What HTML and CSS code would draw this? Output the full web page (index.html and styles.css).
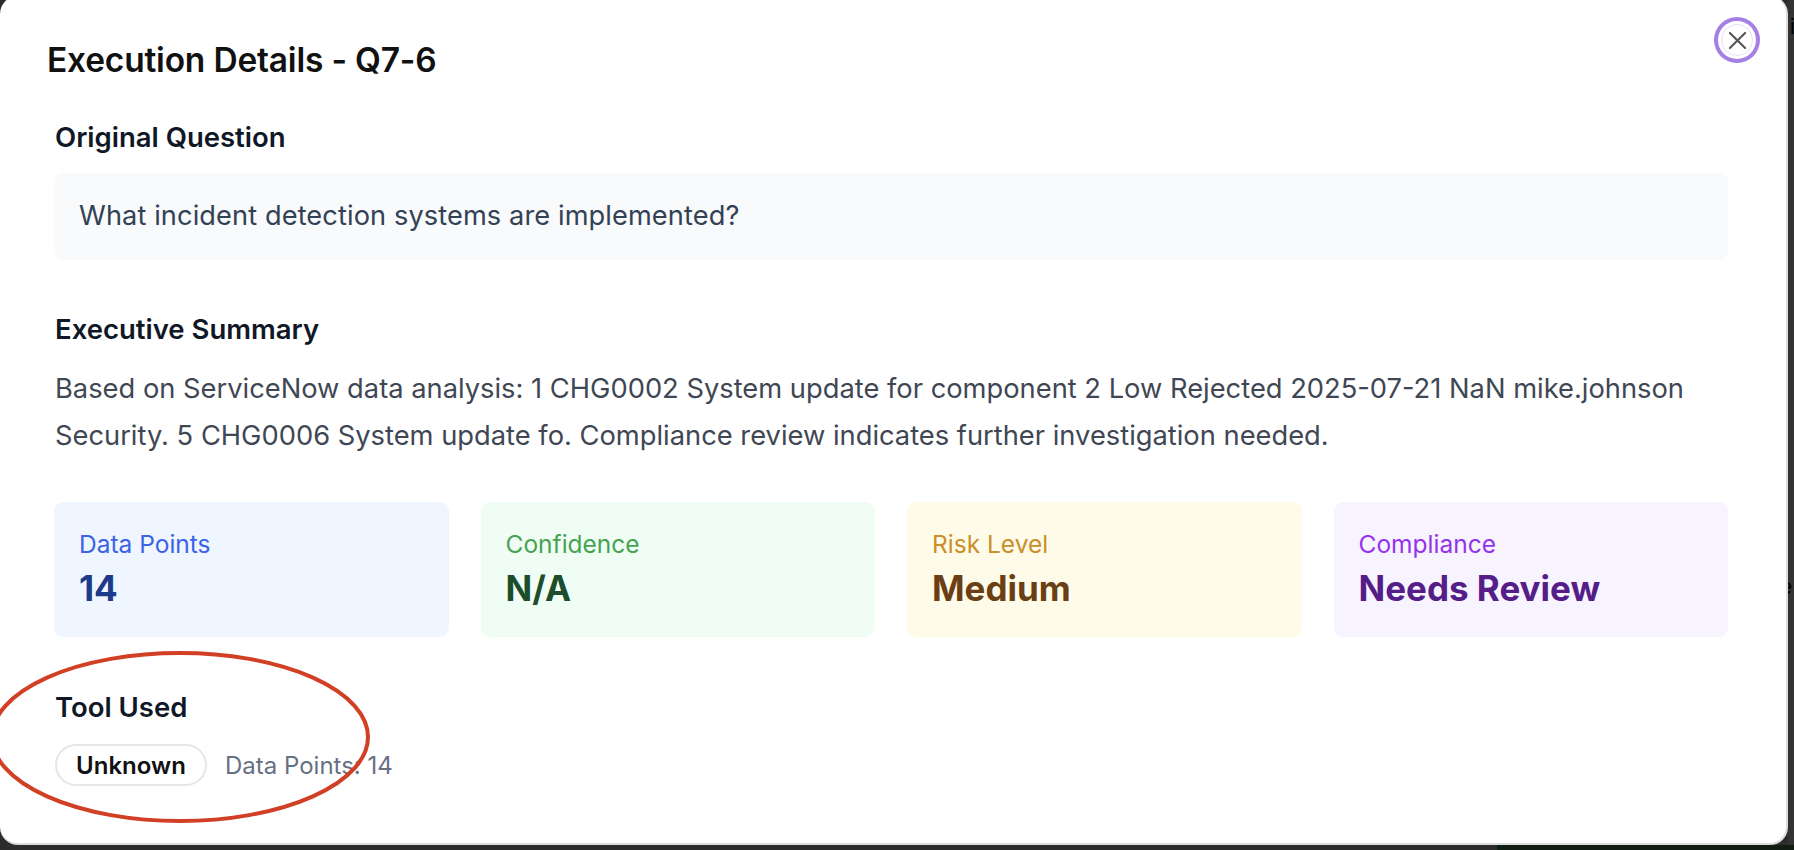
FILE: index.html
```html
<!DOCTYPE html>
<html lang="en">
<head>
<meta charset="utf-8">
<title>Execution Details - Q7-6</title>
<link rel="stylesheet" href="styles.css">
</head>
<body>
<div class="backdrop">
  <div class="modal">
    <button class="close" aria-label="Close">
      <svg width="20" height="20" viewBox="0 0 20 20" fill="none" stroke="#555" stroke-width="2.2" stroke-linecap="round"><path d="M2 2L18 18M18 2L2 18"/></svg>
    </button>
    <header class="modal-header">
      <h1 class="title">Execution Details - Q7-6</h1>
    </header>
    <div class="modal-body">
      <section class="sec sec-question">
        <h2 class="sec-title">Original Question</h2>
        <div class="question-box">What incident detection systems are implemented?</div>
      </section>
      <section class="sec sec-summary">
        <h2 class="sec-title">Executive Summary</h2>
        <p class="summary">Based on ServiceNow data analysis: 1 CHG0002 System update for component 2 Low Rejected 2025-07-21 NaN mike.johnson Security. 5 CHG0006 System update fo. Compliance review indicates further investigation needed.</p>
      </section>
      <div class="cards">
        <div class="card card-blue"><div class="card-label">Data Points</div><div class="card-value">14</div></div>
        <div class="card card-green"><div class="card-label">Confidence</div><div class="card-value">N/A</div></div>
        <div class="card card-yellow"><div class="card-label">Risk Level</div><div class="card-value">Medium</div></div>
        <div class="card card-purple"><div class="card-label">Compliance</div><div class="card-value">Needs Review</div></div>
      </div>
      <section class="sec sec-tool">
        <h2 class="sec-title">Tool Used</h2>
        <div class="tool-row">
          <span class="pill">Unknown</span>
          <span class="tool-meta">Data Points: 14</span>
        </div>
      </section>
    </div>
    <svg class="annot" width="400" height="190" viewBox="0 0 400 190" fill="none">
      <ellipse cx="192" cy="95" rx="188" ry="84" stroke="#d13f24" stroke-width="4"/>
    </svg>
  </div>
  <div class="side-strip"><span class="side-i">i</span><span class="side-e">e</span></div>
</div>
<div class="bottom-strip"><div class="bottom-left"></div><div class="bottom-right"></div></div>
</body>
</html>
```
FILE: styles.css
```css
* { box-sizing: border-box; }
html, body { margin: 0; padding: 0; }
body {
  width: 1794px;
  height: 850px;
  overflow: hidden;
  background: #2c2c2c;
  font-family: Inter, "Noto Sans", sans-serif;
}
.backdrop {
  display: flex;
  height: 845px;
}
.modal {
  position: relative;
  width: 1788px;
  height: 849px;
  margin-top: -4px;
  background: #fff;
  border-radius: 18px;
  border-right: 2px solid #dcdcdc;
  border-bottom: 2px solid #dcdcdc;
  overflow: hidden;
}
.side-strip {
  flex: 1;
  background: #333;
  position: relative;
  overflow: hidden;
}
.side-i, .side-e {
  position: absolute;
  left: 2px;
  color: #000;
  font-size: 22px;
  font-family: "Liberation Sans", sans-serif;
}
.side-i { top: 14px; }
.side-e { top: 574px; left: -8px; }
.bottom-strip {
  display: flex;
  height: 5px;
}
.bottom-left { width: 1497px; background: #2c2c2c; }
.bottom-right { flex: 1; background: #0f1d13; }

.close {
  position: absolute;
  top: 28px;
  right: 33px;
  width: 32px;
  height: 32px;
  padding: 0;
  border: 1px solid #e6defa;
  border-radius: 50%;
  background: #fff;
  display: flex;
  align-items: center;
  justify-content: center;
  box-shadow: 0 0 0 3px #fff, 0 0 0 7px #a47fe6;
}
.close svg { width: 19px; height: 19px; }

.modal-header {
  padding: 44px 47px 0 47px;
}
.title {
  margin: 0;
  font-size: 33.5px;
  line-height: 40px;
  font-weight: 600;
  color: #111;
  letter-spacing: -0.2px;
}
.modal-body {
  padding: 0 58px 0 54px;
}
.sec-title {
  margin: 0;
  padding-left: 1px;
  font-size: 27.5px;
  line-height: 32px;
  font-weight: 600;
  color: #101828;
}
.sec-question { margin-top: 41px; }
.question-box {
  margin-top: 20px;
  padding: 27px 25px 28px;
  background: #f8fafc;
  border-radius: 9px;
  font-size: 27.2px;
  line-height: 32px;
  letter-spacing: 0.1px;
  color: #334155;
}
.sec-summary { margin-top: 53px; }
.summary {
  margin: 20px 0 0;
  padding-left: 1px;
  font-size: 27.3px;
  line-height: 47px;
  color: #3f4754;
}
.cards {
  margin-top: 43px;
  display: grid;
  grid-template-columns: repeat(4, 1fr);
  gap: 32px;
}
.card {
  height: 135px;
  padding: 27px 25px 0;
  border-radius: 9px;
}
.card-label {
  font-size: 24.5px;
  line-height: 30px;
}
.card-value {
  margin-top: 9px;
  font-size: 35px;
  line-height: 40px;
  font-weight: 700;
}
.card-blue { background: #eff6ff; }
.card-blue .card-label { color: #3a63e6; }
.card-blue .card-value { color: #1e3a8a; }
.card-green { background: #f0fdf4; }
.card-green .card-label { color: #46a352; }
.card-green .card-value { color: #1c4d2c; }
.card-yellow { background: #fefce8; }
.card-yellow .card-label { color: #c98f2a; }
.card-yellow .card-value { color: #6b3f15; }
.card-purple { background: #f8f4ff; }
.card-purple .card-label { color: #9333ea; }
.card-purple .card-value { color: #541d88; }

.sec-tool { margin-top: 54px; }
.tool-row {
  margin-top: 21px;
  display: flex;
  align-items: center;
  gap: 18px;
}
.pill {
  display: inline-flex;
  align-items: center;
  justify-content: center;
  height: 42px;
  width: 152px;
  margin-left: 1px;
  border: 2px solid #e6e6e6;
  border-radius: 21px;
  font-size: 24px;
  font-weight: 600;
  color: #111;
}
.tool-meta {
  font-size: 24px;
  color: #667085;
}
.annot {
  position: absolute;
  left: -12px;
  top: 646px;
}
```
